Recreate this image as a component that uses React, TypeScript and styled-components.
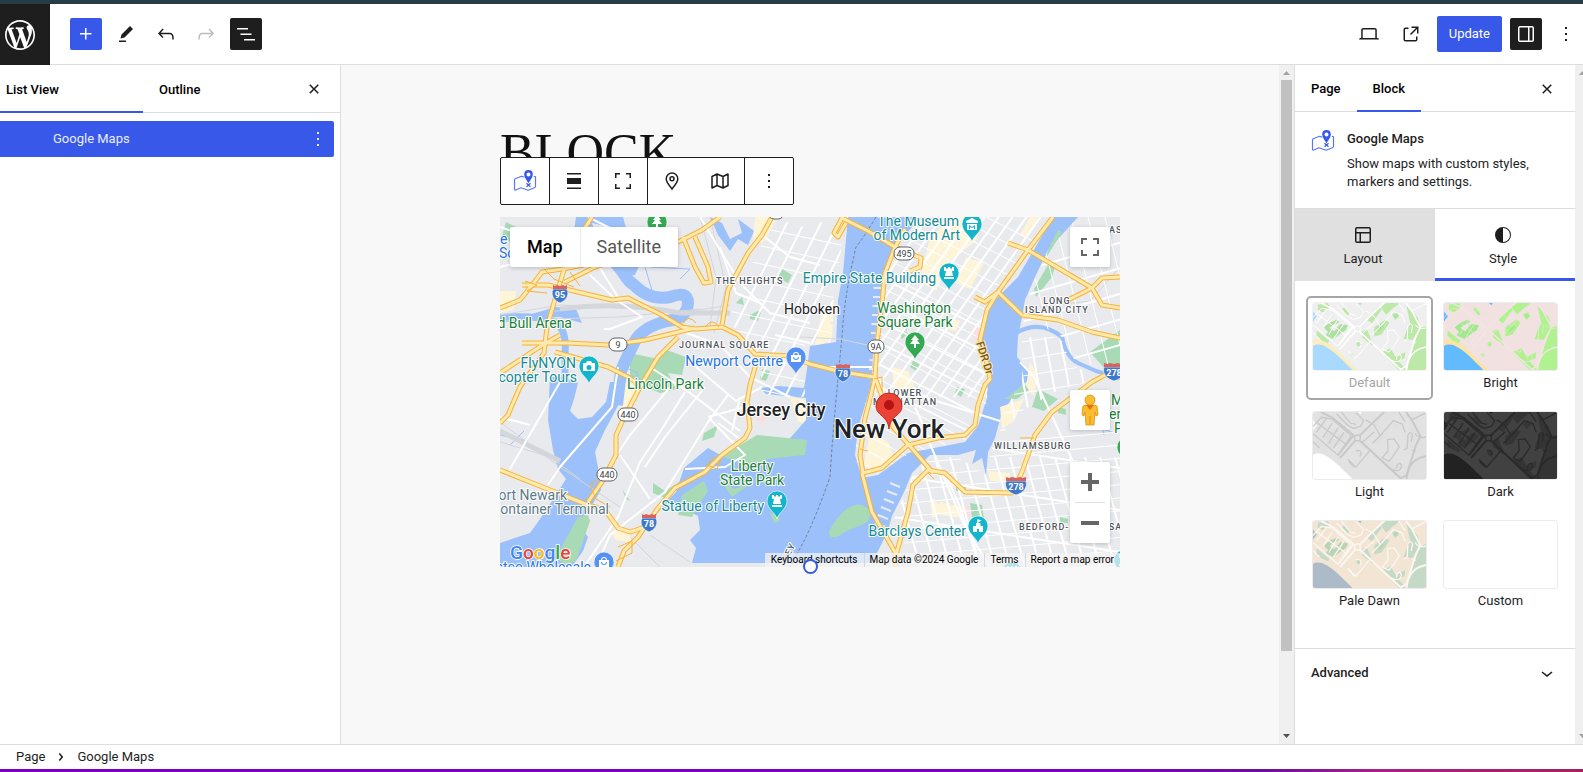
import React from 'react';
import styled, { createGlobalStyle, css } from 'styled-components';

const BLUE = '#3858e9';
const INK = '#1e1e1e';
const LINE = '#dddddd';

const GlobalStyle = createGlobalStyle`
  *, *::before, *::after { box-sizing: border-box; }
  body { margin: 0; font: 400 13px/18px Roboto, "Liberation Sans", sans-serif; color: ${INK}; background: #fff; }
  button { font: inherit; color: inherit; border: 0; padding: 0; background: none; cursor: pointer; }
  h1, h2, p, nav { margin: 0; }
  svg { display: block; flex: none; }
`;

/* ---------- icons ---------- */

const PATHS = {
  plus: 'M11 12.5V17.5H12.5V12.5H17.5V11H12.5V6H11V11H6V12.5H11Z',
  edit: 'm19 7-3-3-8.5 8.5-1 4 4-1L19 7Zm-7 11.5H5V20h7v-1.5Z',
  undo: 'M18.3 11.7c-.6-.6-1.4-.9-2.3-.9H6.7l2.9-3.3-1.1-1-4.5 5L8.5 16l1-1-2.7-2.7H16c.5 0 .9.2 1.3.5 1 1 1 3.4 1 4.5v.3h1.5v-.2c0-1.5 0-4.3-1.5-5.7z',
  redo: 'M15.6 6.5l-1.1 1 2.9 3.3H8c-.9 0-1.7.3-2.3.9-1.4 1.5-1.4 4.2-1.4 5.6v.2h1.5v-.3c0-1.1 0-3.5 1-4.5.3-.3.7-.5 1.3-.5h9.2L14.5 15l1.1 1.1 4.6-4.6-4.6-5z',
  list: 'M3 6h11v1.5H3V6Zm3.5 5.5h11V13h-11v-1.5ZM21 17H10v1.5h11V17Z',
  close: 'M12 13.06l3.712 3.713 1.061-1.06L13.061 12l3.712-3.712-1.06-1.06L12 10.938 8.288 7.227l-1.061 1.06L10.939 12l-3.712 3.712 1.06 1.061L12 13.061z',
  more: 'M13 19h-2v-2h2v2zm0-6h-2v-2h2v2zm0-6h-2V5h2v2z',
  laptop: 'M20.5 16h-.7V8c0-1.1-.9-2-2-2H6.2c-1.1 0-2 .9-2 2v8h-.7c-.8 0-1.5.7-1.5 1.5h20c0-.8-.7-1.5-1.5-1.5zM5.7 8c0-.3.2-.5.5-.5h11.6c.3 0 .5.2.5.5v8H5.7V8z',
  external: 'M19.5 4.5h-7V6h4.44l-5.97 5.97 1.06 1.06L18 7.06v4.44h1.5v-7Zm-13 1a2 2 0 0 0-2 2v10a2 2 0 0 0 2 2h10a2 2 0 0 0 2-2v-3H17v3a.5.5 0 0 1-.5.5h-10a.5.5 0 0 1-.5-.5v-10a.5.5 0 0 1 .5-.5h3V5.5h-3Z',
  drawer: 'M18 4H6c-1.1 0-2 .9-2 2v12c0 1.1.9 2 2 2h12c1.1 0 2-.9 2-2V6c0-1.1-.9-2-2-2zm-4 14.5H6c-.3 0-.5-.2-.5-.5V6c0-.3.2-.5.5-.5h8v13zm4.5-.5c0 .3-.2.5-.5.5h-2.5v-13H18c.3 0 .5.2.5.5v12z',
  layout: 'M18 5.5H6a.5.5 0 00-.5.5v3h13V6a.5.5 0 00-.5-.5zm.5 5H10v8h8a.5.5 0 00.5-.5v-7.5zm-10 0h-3V18a.5.5 0 00.5.5h2.5v-8zM6 4h12a2 2 0 012 2v12a2 2 0 01-2 2H6a2 2 0 01-2-2V6a2 2 0 012-2z',
  contrast: 'M12 4a8 8 0 1 0 0 16 8 8 0 0 0 0-16zm0 15V5a7 7 0 0 1 0 14z',
  align: 'M19 5.5H5V4h14v1.5ZM19 20H5v-1.5h14V20ZM5 9h14v6H5V9Z',
  full: 'M4 4h5v1.5H5.500V9H4V4Zm11 0h5v5h-1.500V5.500H15V4ZM4 15h1.500v3.500H9V20H4v-5Zm14.500 0H20v5h-5v-1.500h3.500V15Z',
  chevronDown: 'M17.5 11.6L12 16l-5.5-4.4.9-1.2L12 14l4.5-3.6 1 1.2z',
  chevronRight: 'M10.8622 8.04053L14.2805 12.0286L10.8622 16.0167L9.72327 15.0405L12.3049 12.0286L9.72327 9.01672L10.8622 8.04053Z',
};

const Icon = ({ name, size = 24 }: { name: keyof typeof PATHS; size?: number }) => (
  <svg width={size} height={size} viewBox="0 0 24 24" fill="currentColor" fillRule="evenodd" aria-hidden="true">
    <path d={PATHS[name]} />
  </svg>
);

const WordPressLogo = () => (
  <svg width="36" height="36" viewBox="-2 -2 24 24" fill="#fff" aria-hidden="true">
    <path d="M20 10c0-5.51-4.49-10-10-10C4.48 0 0 4.49 0 10c0 5.52 4.48 10 10 10 5.51 0 10-4.48 10-10zM7.78 15.37L4.37 6.22c.55-.02 1.17-.08 1.17-.08.5-.06.44-1.13-.06-1.11 0 0-1.45.11-2.37.11-.18 0-.37 0-.58-.01C4.12 2.69 6.87 1.11 10 1.11c2.33 0 4.45.87 6.05 2.34-.68-.11-1.65.39-1.65 1.58 0 .74.45 1.36.9 2.1.35.61.55 1.36.55 2.46 0 1.49-1.4 5-1.4 5l-3.03-8.37c.54-.02.82-.17.82-.17.5-.05.44-1.25-.06-1.22 0 0-1.44.12-2.38.12-.87 0-2.33-.12-2.33-.12-.5-.03-.56 1.2-.06 1.22l.92.08 1.26 3.41zM17.41 10c.24-.64.74-1.87.43-4.25.7 1.29 1.05 2.71 1.05 4.25 0 3.29-1.73 6.24-4.4 7.78.97-2.59 1.94-5.2 2.92-7.78zM6.1 18.09C3.12 16.65 1.11 13.53 1.11 10c0-1.3.23-2.48.72-3.59C3.25 10.3 4.67 14.2 6.1 18.09zm4.03-6.63l2.58 6.98c-.86.29-1.76.45-2.71.45-.79 0-1.57-.11-2.29-.33.81-2.38 1.62-4.74 2.42-7.1z" />
  </svg>
);

const BlockIcon = () => (
  <svg width="24" height="24" viewBox="0 0 24 24" fill="none" aria-hidden="true">
    <path
      d="M11 8 8.500 7.300 2.200 9.800a1 1 0 0 0-.7 1v9.400c0 .7.6 1 1.200.8L8 18.800l7 2.400 6.500-2.400c.6-.2 1-.6 1-1.200V8.200c0-.6-.6-.9-1.200-.7"
      stroke="#5b78ee"
      strokeWidth="1.200"
      strokeLinejoin="round"
      strokeLinecap="round"
    />
    <path
      d="M15.500 14.200c-1-2.100-4.300-5.400-4.300-9A4.300 4.300 0 0 1 15.500 1a4.300 4.300 0 0 1 4.300 4.200c0 3.600-3.300 6.900-4.300 9zM15.500 3.400a2 2 0 1 0 0 4 2 2 0 0 0 0-4z"
      fill={BLUE}
      fillRule="evenodd"
    />
    <path d="m13.500 14.200 4 3.600m0-3.600-4 3.600" stroke={BLUE} strokeWidth="1.200" />
  </svg>
);

const PinIcon = () => (
  <svg width="24" height="24" viewBox="0 0 24 24" fill="none" stroke={INK} strokeWidth="1.500" aria-hidden="true">
    <path d="M12 20c-1.500-2.400-5.800-6.200-5.800-10.200a5.800 5.800 0 0 1 11.600 0c0 4-4.300 7.800-5.800 10.200z" />
    <circle cx="12" cy="9.800" r="2" />
  </svg>
);

const MapIcon = () => (
  <svg width="24" height="24" viewBox="0 0 24 24" fill="none" stroke={INK} strokeWidth="1.500" strokeLinejoin="round" aria-hidden="true">
    <path d="M4 7.500 9 5l6 2.500L20 5v11.500L15 19l-6-2.500L4 19zM9 5v11.500M15 7.500V19" />
  </svg>
);

/* ---------- page frame ---------- */

const Page = styled.div`
  display: flex;
  flex-direction: column;
  min-height: 100vh;
  overflow: hidden;
`;
const TopStrip = styled.div`
  height: 4px;
  background: #273d46;
`;
const BottomStrip = styled.div`
  height: 3px;
  background: linear-gradient(90deg, #7d00c0 0, #7d00c0 70%, #6f0e9e 80%, #a8208c 87%, #a62060 100%);
`;
const Header = styled.header`
  display: flex;
  align-items: center;
  height: 61px;
  padding-right: 1px;
  border-bottom: 1px solid ${LINE};
`;
const HomeLink = styled.a`
  display: flex;
  align-items: center;
  align-self: stretch;
  width: 50px;
  margin: 0 20px -1px 0;
  padding-left: 2px;
  background: ${INK};
`;
const Group = styled.div<{ $gap: number }>`
  display: flex;
  align-items: center;
  gap: ${(p) => p.$gap}px;
`;
const Actions = styled(Group)`
  margin-left: auto;
`;
const IconButton = styled.button<{ $tone?: 'blue' | 'dark' | 'faded' }>`
  display: flex;
  align-items: center;
  justify-content: center;
  flex: none;
  width: 32px;
  height: 32px;
  border-radius: 2px;
  ${(p) => p.$tone === 'blue' && css`background: ${BLUE}; color: #fff;`}
  ${(p) => p.$tone === 'dark' && css`background: ${INK}; color: #fff;`}
  ${(p) => p.$tone === 'faded' && css`color: #bdbdbd;`}
`;
const UpdateButton = styled.button`
  height: 36px;
  padding: 0 12px;
  border-radius: 2px;
  background: ${BLUE};
  color: #fff;
`;
const Body = styled.div`
  flex: 1;
  display: flex;
  align-items: stretch;
`;
const Footer = styled.footer`
  display: flex;
  align-items: center;
  gap: 4px;
  height: 25px;
  padding: 0 16px;
  border-top: 1px solid ${LINE};
`;

/* ---------- list view ---------- */

const ListPanel = styled.aside`
  flex: none;
  width: 341px;
  border-right: 1px solid ${LINE};
`;
const TabBar = styled.div<{ $height: number; $end: number }>`
  display: flex;
  height: ${(p) => p.$height}px;
  padding-right: ${(p) => p.$end}px;
  box-shadow: inset 0 -1px 0 ${LINE};
  align-items: stretch;
  > :last-child { margin-left: auto; align-self: center; }
`;
const Tab = styled.button<{ $active?: boolean }>`
  padding: 0 16px;
  font-weight: 500;
  color: #000;
  text-align: left;
  border-bottom: 2px solid ${(p) => (p.$active ? BLUE : 'transparent')};
  border-top: 2px solid transparent;
`;
const ListTab = styled(Tab)`
  width: 143px;
  padding-top: 2px;
  &:first-child { padding-left: 6px; }
`;
const ListRow = styled.div`
  display: flex;
  align-items: center;
  justify-content: space-between;
  height: 36px;
  margin: 8px 6px 0 0;
  padding-left: 53px;
  border-radius: 0 2px 2px 0;
  background: ${BLUE};
  color: #e9edff;
`;

/* ---------- canvas ---------- */

const Canvas = styled.main`
  flex: 1;
  min-width: 0;
  padding: 60px 40px 0;
  background: #f8f8f8;
`;
const Content = styled.div`
  max-width: 620px;
  margin: 0 auto;
`;
const Title = styled.h1`
  height: 92px;
  font: 400 52px/56px "Liberation Serif", serif;
  color: #111;
`;
const MapBlock = styled.div`
  position: relative;
  height: 350px;
`;
const MapView = styled.div`
  height: 100%;
  overflow: hidden;
  > svg { width: 100%; height: 100%; }
`;
const BlockToolbar = styled.div`
  position: absolute;
  left: 0;
  top: -60px;
  display: flex;
  height: 48px;
  border: 1px solid ${INK};
  border-radius: 2px;
  background: #fff;
`;
const ToolGroup = styled.div`
  display: flex;
  & + & { border-left: 1px solid ${INK}; }
  button { width: 48px; height: 46px; }
`;
const Overlay = styled.div<{ $at: 'type' | 'full' | 'pegman' | 'zoom' | 'credits' | 'handle' }>`
  position: absolute;
  ${(p) =>
    ({
      type: 'left: 10px; top: 10px;',
      full: 'right: 10px; top: 10px;',
      pegman: 'right: 10px; bottom: 137px;',
      zoom: 'right: 10px; bottom: 24px;',
      credits: 'right: 0; bottom: 0;',
      handle: 'left: 50%; bottom: -7px; margin-left: -7px;',
    })[p.$at]}
`;
const MapTypes = styled.div`
  display: flex;
  height: 40px;
  border-radius: 2px;
  background: #fff;
  box-shadow: 0 1px 4px rgba(0, 0, 0, 0.2);
`;
const MapType = styled.button<{ $active?: boolean }>`
  padding: 0 17px;
  font-size: 18px;
  font-weight: ${(p) => (p.$active ? 500 : 400)};
  color: ${(p) => (p.$active ? '#000' : '#565656')};
  & + & { box-shadow: inset 1px 0 0 #ececec; }
`;
const MapButtons = styled.div`
  width: 40px;
  border-radius: 2px;
  background: #fff;
  box-shadow: 0 1px 4px rgba(0, 0, 0, 0.2);
  hr { margin: 0 5px; border: 0; height: 1px; background: #e0e0e0; }
`;
const MapButton = styled.button`
  display: flex;
  align-items: center;
  justify-content: center;
  width: 40px;
  height: 40px;
`;
const Credits = styled.div`
  display: flex;
  height: 14px;
`;
const Credit = styled.div`
  padding: 0 6px;
  font-size: 10px;
  line-height: 14px;
  white-space: nowrap;
  color: #000;
  background: rgba(245, 245, 245, 0.72);
  & + & { box-shadow: inset 1px 0 0 rgba(190, 200, 215, 0.6); }
  button, a { color: #000; text-decoration: none; font-size: 10px; line-height: 14px; display: block; }
`;
const Handle = styled.div`
  width: 15px;
  height: 15px;
  border: 2px solid ${BLUE};
  border-radius: 50%;
  background: #fff;
`;

/* ---------- scrollbars ---------- */

const Scrollbar = styled.div<{ $width: number }>`
  flex: none;
  display: flex;
  flex-direction: column;
  justify-content: space-between;
  width: ${(p) => p.$width}px;
  background: #f0f0f0;
  overflow: hidden;
`;
const ScrollTrack = styled.div`
  flex: 1;
  padding: 0 2px;
`;
const ScrollThumb = styled.div`
  height: 88%;
  background: #c1c1c1;
`;
const ScrollArrow = ({ down, color }: { down?: boolean; color: string }) => (
  <svg width="15" height="15" viewBox="0 0 15 15" fill={color}>
    <path d={down ? 'M4 5h7L7.500 9z' : 'M4 10h7L7.500 6z'} />
  </svg>
);

/* ---------- settings sidebar ---------- */

const Sidebar = styled.aside`
  flex: none;
  width: 281px;
  border-left: 1px solid ${LINE};
`;
const BlockCard = styled.div`
  display: flex;
  gap: 12px;
  padding: 17px 16px;
  h2 { margin-bottom: 6px; font-size: 13px; font-weight: 500; line-height: 20px; }
`;
const PanelTabs = styled.div`
  display: grid;
  grid-template-columns: 1fr 1fr;
  border-top: 1px solid ${LINE};
`;
const PanelTab = styled.button<{ $active?: boolean }>`
  display: flex;
  flex-direction: column;
  align-items: center;
  gap: 3px;
  height: 72px;
  padding: 14px 4px 0 0;
  background: ${(p) => (p.$active ? '#fff' : '#e0e0e0')};
  border-bottom: 3px solid ${(p) => (p.$active ? BLUE : '#e0e0e0')};
`;
const StyleGrid = styled.div`
  display: grid;
  grid-template-columns: 1fr 1fr;
  gap: 5px 4px;
  padding: 15px 11px 30px;
`;
const StyleOption = styled.button<{ $selected?: boolean }>`
  display: flex;
  flex-direction: column;
  align-items: center;
  height: 104px;
  gap: 3px;
  padding: 4px;
  border: 2px solid ${(p) => (p.$selected ? '#a6a6a6' : 'transparent')};
  border-radius: 5px;
  color: ${(p) => (p.$selected ? '#a6a6a6' : INK)};
`;
const Thumb = styled.span<{ $soft?: boolean }>`
  display: block;
  width: 100%;
  height: 69px;
  border: 1px solid #ececec;
  border-radius: 3px;
  overflow: hidden;
  opacity: ${(p) => (p.$soft ? 0.62 : 1)};
  svg { width: 100%; height: 100%; }
`;
const Advanced = styled.button`
  display: flex;
  align-items: center;
  justify-content: space-between;
  width: 100%;
  height: 49px;
  padding: 0 16px;
  border-top: 1px solid ${LINE};
  font-weight: 500;
`;

/* ---------- style thumbnails ---------- */

type Palette = { land: string; green: string; water: string; sand: string; road: string; roadWidth: number; accent: string };

const STYLES: { name: string; palette?: Palette }[] = [
  { name: 'Default', palette: { land: '#e6e6e6', green: '#94da74', water: '#76c2ff', sand: '#f8e49a', road: '#ffffff', roadWidth: 3, accent: '#7ccf6a' } },
  { name: 'Bright', palette: { land: '#f1e1e1', green: '#aff28f', water: '#63bbff', sand: '#fde3a0', road: '#f3e5e4', roadWidth: 2, accent: '#a0ea8e' } },
  { name: 'Light', palette: { land: '#e2e2e2', green: '#e0e0e0', water: '#ffffff', sand: '#e2e2e2', road: '#c9c9c9', roadWidth: 4, accent: '#dedede' } },
  { name: 'Dark', palette: { land: '#414141', green: '#343434', water: '#222222', sand: '#414141', road: '#2a2a2a', roadWidth: 4, accent: '#363636' } },
  { name: 'Pale Dawn', palette: { land: '#f2e5d4', green: '#c5dac6', water: '#adbbc9', sand: '#f2e5d4', road: '#fbf6f0', roadWidth: 4, accent: '#b8d4b6' } },
  { name: 'Custom' },
];

const ThumbMap = ({ land, green, water, sand, road, roadWidth, accent }: Palette) => (
  <svg viewBox="0 0 343 204" preserveAspectRatio="none" aria-hidden="true">
    <path fill={land} d="M0 0h343v204H0z" />
    <g fill={green}>
      <path d="M15 5 45 0l6 14-20 14-16-6zM12 84l38 32-9 10L10 100zM148 86l16-6 20 52-34-26zM163 50l38-38 8 8-30 42zM205 12 222 0h42l-26 20-16 16zM186 74l34-24 12 10-24 36-22 6zM240 36l14-10 8 14-12 12zM284 8l34 36 7 30-22 38-28-2 10-30 10-18zM208 150l28-12 14 26 30-14-2 18-20 8 24 26-22 2zM343 70l-18 6-24 64-20 64h62zM88 18l8-5 16 20-8 5zM130 124l10-8 8 10-10 8zM110 156l8-4 8 8-6 6z" />
    </g>
    <g fill={accent}>
      <path d="M32 74l24-18 8 8-14 12 18 12-10 20-20-10 8-10zM70 78l14-14 22 4-6 14-20 14-18 14-6-6zM50 62l22-12 8 8-18 10zM192 78l18-14 6 10-16 14zM244 40l10-8 4 8-10 6z" />
    </g>
    <path fill={sand} d="M0 110c30 0 55 14 82 42s42 42 54 52H0z" />
    <path fill={water} d="M0 130c8-4 20-5 30-1 36 16 56 44 90 75H0zM0 26l12 14-12 16zM136 0h12l-4 7z" />
    <g fill="none" stroke={road} strokeWidth={roadWidth} strokeLinejoin="round">
      <path strokeWidth={roadWidth + 2} d="M24 0 60 18l74 62 132 122 18-10 28-90 14-28-26-50-18-24M134 80l40-40L216 0M134 80 82 140M124 70 78 128M284 204c4-40 20-62 59-70" />
      <circle cx="135" cy="79" r="9" fill={land} />
      <path d="M0 44 26 16l32 6 58 50-22 32-18 28L0 66M14 34l88 66M40 20 10 62M58 34 30 78M76 48 48 96M94 62 62 110M72 6l30 32 20 12 22-6 10-18-24-24M86 0l28 34 16 4M160 24l24 14 20 34M204 72l40-46 26 10 10 26M180 96l34-34M186 60l-36 32M226 84l20-2 16 24-20 30-12 14-20-10 18-22zM276 116l10-6 2-40q8-14 14 0l-4 22M176 114l-46 54-24-24M130 118q14-4 16 8l-4 10M108 150l18 18M214 152q20 30 46 26 14-10 4-22-12 4-10 16M300 116l12 4M310 66q10 16 33 10M260 0l20 30M0 90l20 20M300 24l43-22" />
    </g>
  </svg>
);

/* ---------- street map ---------- */

const HIGHWAYS = [
  '0,91 20,83 33,67 42,55 62,52 84,48',
  '92,0 78,22 64,53 58,72 47,110 44,136 20,170 13,186 8,198 0,206',
  '0,156 44,127 60,118',
  '22,68 48,68 78,75 112,83 128,81 162,98 182,110 195,112 222,110 238,118 255,137 290,139 310,147 342,155 375,160',
  '22,126 68,126 108,128 145,123 195,111',
  '65,65 95,50 138,36 178,25 202,13 220,0',
  '183,20 195,50 204,66 211,65 208,50 195,20',
  '272,0 262,18 248,36 228,73 222,108',
  '178,120 158,140 140,170 122,205 116,218 116,238 102,265 88,285',
  '55,135 80,142 108,150 128,160 140,168',
  '0,253 45,271 88,288 105,293 118,311 130,315 145,310 158,291 175,271 205,255 222,238 245,221 250,211 247,185 250,168 258,140',
  '118,350 124,334 138,320 150,302',
  '342,1 368,14 395,30 421,41 420,50 410,54',
  '342,1 334,16 338,20 346,6',
  '405,12 395,30 385,56 382,86 377,126 375,160 371,178 365,201 360,238 363,256 382,251 408,228 438,221 465,218 475,208 478,188 485,168 490,162 488,150 480,123 487,93 498,75 528,33 553,0',
  '362,256 372,295 395,335 396,350',
  '396,338 408,295 413,268 428,253 445,256 465,275 512,276 522,255 535,218 552,195 575,178 592,165 620,150',
  '375,160 393,210 415,235 433,256',
  '498,75 522,98 558,103 592,115 620,121',
  '508,26 528,33 592,71 602,88 620,91',
  '568,83 592,71 602,61 620,60',
  '475,80 485,85 498,75',
];

const range = (count: number) => Array.from({ length: count }, (_, i) => i);

type Grid = { id: string; area: string; lines: { n: number; from: number[]; to: number[]; step: number[]; w: number }[] };

const GRIDS: Grid[] = [
  {
    id: 'manhattan',
    area: '420,0 396,30 384,56 378,126 370,170 358,212 355,238 362,258 380,255 410,236 465,223 478,208 487,185 488,155 478,124 492,86 518,50 553,0',
    lines: [
      { n: 14, from: [300, 180], to: [450, -30], step: [14, 0], w: 2 },
      { n: 22, from: [370, -60], to: [560, 38], step: [-3, 14], w: 1 },
      { n: 6, from: [340, 150], to: [520, 240], step: [4, -20], w: 2 },
    ],
  },
  {
    id: 'brooklyn',
    area: '430,240 458,240 485,258 495,221 505,190 560,170 620,160 620,350 400,350 388,318 405,275 413,258',
    lines: [
      { n: 20, from: [390, 240], to: [420, 350], step: [15, 0], w: 2 },
      { n: 14, from: [390, 235], to: [620, 215], step: [2, 13], w: 1 },
      { n: 4, from: [380, 340], to: [640, 380], step: [0, -42], w: 2 },
    ],
  },
  {
    id: 'queens',
    area: '578,0 548,33 530,75 522,112 540,108 562,120 574,142 620,158 620,0',
    lines: [
      { n: 9, from: [520, 0], to: [560, 160], step: [17, 0], w: 1 },
      { n: 7, from: [500, 60], to: [640, 20], step: [2, 25], w: 2 },
    ],
  },
  {
    id: 'greenpoint',
    area: '522,120 545,114 562,124 572,148 600,162 560,172 520,195 500,220 500,200 522,165',
    lines: [
      { n: 7, from: [500, 120], to: [520, 230], step: [15, 0], w: 2 },
      { n: 6, from: [490, 130], to: [620, 110], step: [0, 17], w: 1 },
    ],
  },
  {
    id: 'hoboken',
    area: '300,10 345,0 342,26 333,83 330,126 305,128 305,180 262,178 260,140 240,116 228,104 250,50 276,0',
    lines: [
      { n: 9, from: [200, 180], to: [300, -20], step: [17, 0], w: 2 },
      { n: 10, from: [210, 0], to: [350, 30], step: [0, 18], w: 1 },
    ],
  },
];

const ROADS = [
  '90,58 115,82 142,100 110,112 104,112', '98,48 118,80', '118,150 112,190 60,250 48,268', '200,0 240,66 270,96 310,106',
  '220,30 236,76 260,86', '262,18 290,40 320,48', '186,116 220,128 250,160 290,180', '150,150 190,176 240,214',
  '120,238 150,282', '185,175 160,215 140,245 118,300 84,350', '170,170 130,218 118,236', '205,170 165,220 145,250', '210,202 245,238 225,250 185,252',
  '208,200 245,190', '218,206 240,222', '228,178 210,202 165,275 110,318 96,350', '240,180 232,214', '0,200 30,208', '60,165 10,252',
  '500,204 430,182 410,172', '428,222 448,270 465,310 490,350', '430,224 415,190', '445,256 460,290 480,350', '520,145 534,160 580,260',
  '0,50 40,40 60,10', '0,10 30,20 70,14', '88,0 120,16 140,44', '330,150 372,150', '275,118 310,126', '196,150 236,184 262,170',
];

const RAILS = ['200,0 216,60 210,110', '210,0 226,70 214,116', '48,95 110,88 180,96 230,88', '50,102 120,100 200,92', '0,205 60,250 120,290', '0,225 50,240 80,262', '300,120 340,122 376,130', '0,98 60,88 140,92', '540,90 590,84 620,50', '130,320 160,350', '150,318 190,345'];

const Pin = ({ x, y, color, glyph }: { x: number; y: number; color: string; glyph: 'camera' | 'bag' | 'museum' | 'tower' | 'tree' | 'castle' }) => (
  <g transform={`translate(${x} ${y})`}>
    <path d="M0 18C-1 12-10 8-10 0a10 10 0 0 1 20 0c0 8-9 12-10 18z" fill={color} stroke="#fff" strokeWidth=".6" />
    {glyph === 'camera' && <path fill="#fff" fillRule="evenodd" d="M-6-3h3l1-2h4l1 2h3v8H-6zM0-1a2.500 2.500 0 1 0 0 5 2.500 2.500 0 0 0 0-5z" />}
    {glyph === 'bag' && <path fill="#fff" fillRule="evenodd" d="M-5-2h2a3 3 0 0 1 6 0h2v7H-5zM-2-2h4a2 2 0 0 0-4 0zM-3 0a3 3 0 0 0 6 0h-1a2 2 0 0 1-4 0z" />}
    {glyph === 'museum' && <path fill="#fff" fillRule="evenodd" d="M0-6l6 3v2H-6v-2zM-5 0H5v6H-5zM-3 1v4h1V3l2 1 2-1v2h1V1L0 3z" />}
    {glyph === 'tower' && <path fill="#fff" d="M-5-6h2v1.500h2V-6h2v1.500h2V-6h2v4H3l1 5H-4l1-5h-2zM-5 4H5v2H-5z" />}
    {glyph === 'castle' && <path fill="#fff" d="M-.5-7l4 1.500-3 1.500v1h2v3H5V6H1V3h-2v3h-4V0h3v-3h1z" />}
    {glyph === 'tree' && <path fill="#fff" d="M0-7l4 5H2l3 4H1v4h-2V2h-4l3-4h-2z" />}
  </g>
);

const Interstate = ({ x, y, n }: { x: number; y: number; n: string }) => {
  const wide = n.length > 2;
  return (
    <g transform={`translate(${x} ${y})`}>
      <path
        d={wide ? 'M-10-4H10C12 3 7 8 0 10-7 8-12 3-10-4z' : 'M-7-4H7C10 3 5 8 0 10-5 8-10 3-7-4z'}
        fill="#3f78c9"
        stroke="#fff"
        strokeWidth=".6"
      />
      <path
        d={wide ? 'M-10-8l3 1 3-1 4 1 4-1 3 1 3-1v4h-20z' : 'M-7-8l2 1 2-1 3 1 3-1 2 1 2-1v4H-7z'}
        fill="#d9625c"
      />
      <text y="5" textAnchor="middle" fontSize="9" fontWeight="700" fill="#fff">{n}</text>
    </g>
  );
};

const Route = ({ x, y, n, w = 20 }: { x: number; y: number; n: string; w?: number }) => (
  <g transform={`translate(${x} ${y})`}>
    <rect x={-w / 2} y="-7" width={w} height="13" rx="6" fill="#fff" stroke="#5f6368" />
    <text y="3" textAnchor="middle" fontSize="9" fill="#3c4043">{n}</text>
  </g>
);

const Label = styled.text<{ $kind: 'park' | 'sight' | 'shop' | 'area' | 'town' | 'city' | 'metro' | 'port' | 'road' }>`
  paint-order: stroke;
  stroke: #fff;
  stroke-width: 2px;
  stroke-linejoin: round;
  font-size: 14px;
  ${(p) =>
    ({
      park: 'fill: #188038;',
      sight: 'fill: #128a93;',
      shop: 'fill: #1f73e8;',
      port: 'fill: #5c7a89;',
      area: 'fill: #50555b; font-size: 9px; font-weight: 500; letter-spacing: 1px;',
      road: 'fill: #7a5a22; stroke: #fde7a6; font-size: 11px; font-weight: 500;',
      town: 'fill: #202124; font-size: 14px;',
      city: 'fill: #202124; font-size: 18px; font-weight: 500;',
      metro: 'fill: #202124; font-size: 26px; font-weight: 500;',
    })[p.$kind]}
`;

type Kind = React.ComponentProps<typeof Label>['$kind'];
const LABELS: [Kind, string, number, number, 'start' | 'middle' | 'end'][] = [
  ['shop', 'e', 0, 27, 'start'], ['shop', 'Sc', -1, 41, 'start'],
  ['area', 'THE HEIGHTS', 216, 67, 'start'], ['area', 'JOURNAL SQUARE', 179, 131, 'start'],
  ['town', 'Hoboken', 284, 97, 'start'], ['shop', 'Newport Centre', 283, 149, 'end'],
  ['park', 'Lincoln Park', 127, 172, 'start'], ['sight', 'FlyNYON', 76, 151, 'end'], ['sight', 'Helicopter Tours', 77, 165, 'end'],
  ['park', 'Red Bull Arena', 72, 111, 'end'], ['sight', 'The Museum', 459, 9, 'end'], ['sight', 'of Modern Art', 460, 23, 'end'],
  ['sight', 'Empire State Building', 436, 66, 'end'], ['park', 'Washington', 414, 96, 'middle'], ['park', 'Square Park', 415, 110, 'middle'],
  ['area', 'LONG', 557, 87, 'middle'], ['area', 'ISLAND CITY', 557, 96, 'middle'], ['area', 'ASTORIA', 609, 16, 'start'],
  ['area', 'LOWER', 405, 179, 'middle'], ['area', 'MANHATTAN', 405, 188, 'middle'],
  ['city', 'Jersey City', 281, 199, 'middle'], ['metro', 'New York', 389, 221, 'middle'],
  ['area', 'WILLIAMSBURG', 494, 232, 'start'], ['area', 'BEDFORD-STUYVESANT', 519, 313, 'start'],
  ['sight', 'Barclays Center', 466, 319, 'end'], ['park', 'Liberty', 252, 254, 'middle'], ['park', 'State Park', 252, 268, 'middle'],
  ['sight', 'Statue of Liberty', 264, 294, 'end'], ['port', 'Port Newark', 67, 283, 'end'], ['port', 'Container Terminal', 109, 297, 'end'],
  ['park', 'M', 611, 188, 'start'], ['park', 'ern', 609, 202, 'start'], ['park', 'P', 614, 216, 'start'],
  ['shop', 'Costco Wholesale', 91, 355, 'end'],
];

const LOGO: [string, string][] = [['G', '#4285f4'], ['o', '#ea4335'], ['o', '#fbbc04'], ['g', '#4285f4'], ['l', '#34a853'], ['e', '#ea4335']];

const StreetMap = () => (
  <svg viewBox="0 0 620 350" preserveAspectRatio="xMidYMid slice" role="img" aria-label="Map of New York">
    <defs>
      {GRIDS.map((g) => (
        <clipPath id={g.id} key={g.id}><polygon points={g.area} /></clipPath>
      ))}
    </defs>
    <path fill="#e8eaed" d="M0 0h620v350H0z" />
    <g fill="#fef5d9">
      <path d="M255 0h22l-12 24-12 4zM0 74h16l-2 18-14 4zM120 170l22-14-8 30-12 6zM322 96l12-14-2 40-18 10zM290 180l20 4v26l-12-6z" />
      <path d="M110 315l18-4 4 14-16-2z" />
    </g>

    {/* parks on the mainland */}
    <path
      fill="#a8dab5"
      d="M6 5l12 6-8 14-8-6zM130 136l28 6 6-10 22 8-4 18-14-2 8 16-16 4-18-8-12-10zM282 52l10 6-4 8-12-6zM250 98l12-6-4 12-8-2zM236 86l6-6 2 8zM262 152l8 2-4 10-6-2zM204 216l14-8-4 12-12 4zM153 266l12 8 22-14-20 22-14-6zM122 272l8 12-4-2z"
    />

    {/* rivers and bays */}
    <g fill="#9cc0f9">
      <path d="M76 0h47l6 22 14 18-8 18-16 2-18-22-20-8-6 12-4-8zM210 0l12 6 8 16 12-6-4-14 16 12-6 14-10-6-8 12-12-16z" />
      <path d="M50 160h14l14 6-4 16-4 12 8 8 14-2 14-15 4-20 14 0-4 20-16 30-9 20 4 20 2 18-12 20-10 15 9 12-5 14-17 24 5 12H0v-44l30-10 10-14 12-18 14-22-8-10-5-19-5-30z" />
      <path d="M0 106l26-4 34-2 22 6-6-14-20-2z" />
      <path d="M348 0h72l-24 30-12 30-4 33-7 40-1 33-14 45-3 27 7 23 16-3 30-22 57-11 13-16 9-28 1-28-10-27 14-40 26-26L553 0h25l-30 33-13 27-10 23-3 17-4 20-1 20 18 20-13 8-20 27-7 26-7 14-2 24-4-18-10 6 4-14-18 5h-28l-18 18-7 17-13 26-4 14-6 13-10 20H192l4-15-6-8 10-10-2-14-20-10-20 4 18-18 8-24 24-20 14 8 26 6 24-6 20-20 14-16V181l-40-4-6-6 18-2 26 2 2-12 4-30 26-4 2-42 5-27z" />
    </g>
    <g fill="none" stroke="#9cc0f9" strokeLinejoin="round">
      <path strokeWidth="12" d="M118 40q4 20 16 28 16 16 36 12 22-8 17 12-4 10-20 12-24 6-32 20-10 20-14 30l-4 34" />
      <path strokeWidth="7" d="M-5 101q40-4 60 4 12 8 10 30v60" />
      <path strokeWidth="4" d="M516 116q24-14 46 4 4 20 16 26l18 8 24 7" />
      <path strokeWidth="1" d="M0 218l28 6M10 228l14-14M150 50l40 2-10 10M30 350l10-12M142 40l12 40M124 150l14 6-4 12 14-2M128 158l24 8M595 210l20 6M600 200l4 18" />
    </g>
    <path fill="#e8eaed" d="M78 150h24l6 22-14 10-12 2 4-14-8-8zM92 6l18 4-4 12-10-4z" />

    {/* waterfront parks and islands */}
    <g fill="#a8dab5">
      <path d="M257 218l50 5-2 15-38 4-18 12-12-10-14-4 14-10zM182 278l22-14 4 10-8 12-8 14-14-2zM220 262l14 10 18-6-20 14z" />
      <path d="M329 315q4-10 14-20 16-14 26-2 4 12-10 16-16 6-20 10-10 4-10-4zM78 300l10-2 2 6-14 40-12 4-8-8zM270 296l8 2 2 6-6 2z" />
      <path d="M548 48l8-2-4 14-16 20-2-8zM548 33l10-20 4 2-16 26zM590 135l30-22v46l-14-6zM414 142l6 6-4 6-6-4zM457 170l8 2-4 8-6-4zM505 182l18-14h12l-18 14zM538 172l20 10-14 12-12-4zM470 286l12 2 2 14-12-2zM456 266l10 4v4h-10zM558 190l8 2v6l-8-2zM560 300l8 2v4h-8zM400 116l6-6 2 6-6 6z" />
    </g>
    <path
      fill="#fef5d9"
      d="M430 20l30-24 24 2-8 26-26 20-14 30-16-10zM466 40l18 6-14 26-14-6zM392 150l16 4 10 24-24-8zM370 215l18 10 6 14-20 14-10-6zM500 190l24-8-10 22-12 8zM430 280l12 10-10 12zM530 0l8 0-10 20-8-2zM530 145l8 14-4 20-8-10zM574 180l20 4 10 10-20 2zM450 100l10 4-4 10-10-2zM488 254l22 2v8h-20zM440 285l24 6-2 10-26-4z"
    />
    <path fill="#fbdfe0" d="M472 116l8-8 2 10-6 8zM256 196l12 2-4 8-8-2zM464 288l6 2v12l-6-4z" />

    <g fill="none" stroke="#d3d6db" strokeWidth="1">
      {RAILS.map((r) => <polyline key={r} points={r} />)}
      <path strokeWidth="5" d="M60 92q60-8 120 4l50 0M0 214l60 30" />
    </g>

    {/* piers */}
    <g stroke="#e8eaed" strokeWidth="2">
      {range(12).map((i) => <path key={i} d={`M${374 - i / 2} ${62 + i * 9}h9`} />)}
      {range(7).map((i) => <path key={i} d={`M${400 - i * 3} ${270 + i * 8}l-10-4`} />)}
      {range(5).map((i) => <path key={i} d={`M${334 - i} ${50 + i * 14}h7`} />)}
    </g>

    {GRIDS.map((g) => (
      <g key={g.id} clipPath={`url(#${g.id})`} stroke="#fff">
        {g.lines.map((l, k) =>
          range(l.n).map((i) => (
            <line
              key={`${k}-${i}`}
              strokeWidth={l.w}
              x1={l.from[0] + l.step[0] * i}
              y1={l.from[1] + l.step[1] * i}
              x2={l.to[0] + l.step[0] * i}
              y2={l.to[1] + l.step[1] * i}
            />
          ))
        )}
      </g>
    ))}
    <g fill="none" stroke="#fff" strokeWidth="2" strokeLinejoin="round">
      {ROADS.map((r) => <polyline key={r} points={r} />)}
    </g>

    <path d="M376 0q-12 20-20 30-12 50-14 90-6 60-10 110l-2 30q-14 40-26 64l-14 26" fill="none" stroke="#6f8199" strokeDasharray="3 2" />

    <g fill="none" stroke="#f9b233" strokeWidth="5" strokeLinejoin="round">
      {HIGHWAYS.map((h) => <polyline key={h} points={h} />)}
    </g>
    <g fill="none" stroke="#fee9ae" strokeWidth="3" strokeLinejoin="round">
      {HIGHWAYS.map((h) => <polyline key={h} points={h} />)}
    </g>
    <path
      fill="none"
      stroke="#f9b233"
      d="M25 64l12 4-10 6 20 2M44 52l10 10 20 8M70 55l10 14M98 262l-8 6 6 14 14 8M118 330l14-6v12l-16 8M182 108q6-12 14-2M205 110q8-10 14 0M213 240l-6 8 10 4 4-10M374 162l8-2v14M520 221h14M360 232l8 2M428 256l6 6"
    />

    <Interstate x={60} y={76} n="95" />
    <Interstate x={343} y={155} n="78" />
    <Interstate x={149} y={305} n="78" />
    <Interstate x={516} y={268} n="278" />
    <Interstate x={614} y={154} n="278" />
    <Route x={118} y={128} n="9" w={18} />
    <Route x={404} y={37} n="495" />
    <Route x={376} y={130} n="9A" w={16} />
    <Route x={128} y={198} n="440" />
    <Route x={107} y={258} n="440" />
    <Route x={276} y={-4} n="" w={16} />

    {LABELS.map(([kind, text, x, y, anchor]) => (
      <Label key={text + x} $kind={kind} x={x} y={y} textAnchor={anchor}>{text}</Label>
    ))}
    <Label $kind="road" transform="translate(476 126) rotate(72)">FDR Dr</Label>
    <Label $kind="area" transform="translate(290 339) rotate(-62)">EY</Label>

    <Pin x={157} y={5} color="#34a853" glyph="tree" />
    <Pin x={89} y={149} color="#12b5cb" glyph="camera" />
    <Pin x={296} y={140} color="#5491f5" glyph="bag" />
    <Pin x={472} y={7} color="#12b5cb" glyph="museum" />
    <Pin x={449} y={56} color="#12b5cb" glyph="tower" />
    <Pin x={415} y={125} color="#34a853" glyph="tree" />
    <Pin x={277} y={284} color="#12b5cb" glyph="tower" />
    <Pin x={478} y={309} color="#12b5cb" glyph="castle" />
    <Pin x={104} y={345} color="#5491f5" glyph="bag" />
    <Pin x={512} y={355} color="#12b5cb" glyph="tower" />
    <Pin x={624} y={343} color="#12b5cb" glyph="tower" />
    <Pin x={627} y={230} color="#34a853" glyph="tree" />

    <path d="M389 212c-1-8-4-10-8-14-4-3-5-6-5-9a13 13 0 0 1 26 0c0 3-1 6-5 9-4 4-7 6-8 14z" fill="#ea4335" stroke="#b31412" strokeWidth=".8" />
    <circle cx="389" cy="188" r="5" fill="#b31412" />

    <text x="10" y="342" fontSize="19" fontWeight="500" stroke="#fff" strokeWidth="1.500" paintOrder="stroke">
      {LOGO.map(([ch, color], i) => <tspan key={i} fill={color}>{ch}</tspan>)}
    </text>
  </svg>
);

const Pegman = () => (
  <svg width="20" height="32" viewBox="0 0 20 32" aria-hidden="true">
    <path d="M6 11h8l3 1 1 9-2 1-1-4-1 13H6L5 18l-1 4-2-1 1-9z" fill="#fbbc2d" stroke="#d9901c" strokeWidth=".8" strokeLinejoin="round" />
    <path d="M6 11h8l-4 5z" fill="#e8710a" />
    <path d="M10 22v8" stroke="#d9901c" />
    <circle cx="10" cy="6" r="5" fill="#fbbc2d" stroke="#d9901c" strokeWidth=".8" />
  </svg>
);

const MapGlyph = ({ d }: { d: string }) => (
  <svg width="18" height="18" viewBox="0 0 18 18" fill="#666" aria-hidden="true"><path d={d} /></svg>
);

export default function App() {
  return (
    <Page>
      <GlobalStyle />
      <TopStrip />
      <Header>
        <HomeLink href="#" aria-label="View pages"><WordPressLogo /></HomeLink>
        <Group $gap={8}>
          <IconButton $tone="blue" aria-label="Toggle block inserter"><Icon name="plus" /></IconButton>
          <IconButton aria-label="Tools"><Icon name="edit" /></IconButton>
          <IconButton aria-label="Undo"><Icon name="undo" /></IconButton>
          <IconButton $tone="faded" aria-label="Redo"><Icon name="redo" /></IconButton>
          <IconButton $tone="dark" aria-label="Document overview"><Icon name="list" /></IconButton>
        </Group>
        <Actions $gap={8}>
          <Group $gap={10}>
            <IconButton aria-label="Preview"><Icon name="laptop" /></IconButton>
            <IconButton aria-label="View page"><Icon name="external" /></IconButton>
            <UpdateButton>Update</UpdateButton>
          </Group>
          <IconButton $tone="dark" aria-label="Settings"><Icon name="drawer" /></IconButton>
          <IconButton aria-label="Options"><Icon name="more" /></IconButton>
        </Actions>
      </Header>

      <Body>
        <ListPanel>
          <TabBar $height={48} $end={10}>
            <ListTab $active>List View</ListTab>
            <ListTab>Outline</ListTab>
            <IconButton aria-label="Close list view"><Icon name="close" /></IconButton>
          </TabBar>
          <ListRow>
            Google Maps
            <IconButton aria-label="Options for Google Maps"><Icon name="more" /></IconButton>
          </ListRow>
        </ListPanel>

        <Canvas>
          <Content>
            <Title>BLOCK</Title>
            <MapBlock>
              <MapView><StreetMap /></MapView>
              <BlockToolbar role="toolbar" aria-label="Block tools">
                <ToolGroup><IconButton aria-label="Google Maps"><BlockIcon /></IconButton></ToolGroup>
                <ToolGroup><IconButton aria-label="Align"><Icon name="align" /></IconButton></ToolGroup>
                <ToolGroup><IconButton aria-label="Full height"><Icon name="full" /></IconButton></ToolGroup>
                <ToolGroup>
                  <IconButton aria-label="Markers"><PinIcon /></IconButton>
                  <IconButton aria-label="Map type"><MapIcon /></IconButton>
                </ToolGroup>
                <ToolGroup><IconButton aria-label="Options"><Icon name="more" /></IconButton></ToolGroup>
              </BlockToolbar>
              <Overlay $at="type">
                <MapTypes>
                  <MapType $active>Map</MapType>
                  <MapType>Satellite</MapType>
                </MapTypes>
              </Overlay>
              <Overlay $at="full">
                <MapButtons>
                  <MapButton aria-label="Toggle fullscreen view">
                    <MapGlyph d="M0 0h6v2H2v4H0zM12 0h6v6h-2V2h-4zM0 12h2v4h4v2H0zM16 12h2v6h-6v-2h4z" />
                  </MapButton>
                </MapButtons>
              </Overlay>
              <Overlay $at="pegman">
                <MapButtons><MapButton aria-label="Street View"><Pegman /></MapButton></MapButtons>
              </Overlay>
              <Overlay $at="zoom">
                <MapButtons>
                  <MapButton aria-label="Zoom in"><MapGlyph d="M7 0h4v7h7v4h-7v7H7v-7H0V7h7z" /></MapButton>
                  <hr />
                  <MapButton aria-label="Zoom out"><MapGlyph d="M0 7h18v4H0z" /></MapButton>
                </MapButtons>
              </Overlay>
              <Overlay $at="credits">
                <Credits>
                  <Credit><button>Keyboard shortcuts</button></Credit>
                  <Credit>Map data ©2024 Google</Credit>
                  <Credit><a href="#">Terms</a></Credit>
                  <Credit><a href="#">Report a map error</a></Credit>
                </Credits>
              </Overlay>
              <Overlay $at="handle"><Handle /></Overlay>
            </MapBlock>
          </Content>
        </Canvas>
        <Scrollbar $width={15}>
          <ScrollArrow color="#a3a3a3" />
          <ScrollTrack><ScrollThumb /></ScrollTrack>
          <ScrollArrow down color="#505050" />
        </Scrollbar>

        <Sidebar>
          <TabBar $height={47} $end={12}>
            <Tab>Page</Tab>
            <Tab $active>Block</Tab>
            <IconButton aria-label="Close settings"><Icon name="close" /></IconButton>
          </TabBar>
          <BlockCard>
            <BlockIcon />
            <div>
              <h2>Google Maps</h2>
              <p>Show maps with custom styles, markers and settings.</p>
            </div>
          </BlockCard>
          <PanelTabs>
            <PanelTab><Icon name="layout" />Layout</PanelTab>
            <PanelTab $active><Icon name="contrast" />Style</PanelTab>
          </PanelTabs>
          <StyleGrid>
            {STYLES.map((s, i) => (
              <StyleOption key={s.name} $selected={i === 0}>
                <Thumb $soft={i === 0}>{s.palette && <ThumbMap {...s.palette} />}</Thumb>
                {s.name}
              </StyleOption>
            ))}
          </StyleGrid>
          <Advanced>Advanced<Icon name="chevronDown" /></Advanced>
        </Sidebar>
        <Scrollbar $width={8}>
          <ScrollArrow color="#a3a3a3" />
          <ScrollArrow down color="#a3a3a3" />
        </Scrollbar>
      </Body>

      <Footer>
        <span>Page</span>
        <Icon name="chevronRight" />
        <span>Google Maps</span>
      </Footer>
      <BottomStrip />
    </Page>
  );
}
